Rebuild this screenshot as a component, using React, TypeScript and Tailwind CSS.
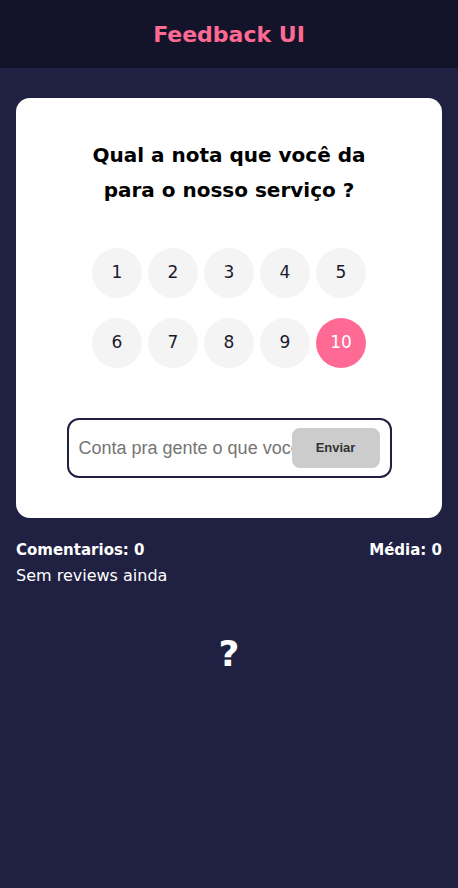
import { useState } from 'react';

const NOTES = [1, 2, 3, 4, 5, 6, 7, 8, 9, 10];

export default function App() {
  const [selected, setSelected] = useState(10);
  const [text, setText] = useState('');

  return (
    <div
      className="min-h-[888px] bg-[#202142] text-white"
      style={{ fontFamily: '"DejaVu Sans", "Noto Sans", sans-serif' }}
    >
      <header className="h-[68px] bg-[#13142a] flex items-center justify-center">
        <h1 className="text-[22px] font-bold text-[#ff6a95]">Feedback UI</h1>
      </header>

      <main className="px-4 pt-[30px]">
        <div className="bg-white rounded-[14px] h-[420px] flex flex-col items-center pt-[40px]">
          <h2 className="text-[20px] font-semibold text-black text-center leading-[35px]">
            Qual a nota que você da
            <br />
            para o nosso serviço ?
          </h2>

          <div className="mt-[40px] grid grid-cols-5 gap-x-[6px] gap-y-[20px]">
            {NOTES.map((n) => (
              <button
                key={n}
                onClick={() => setSelected(n)}
                className={
                  n === selected
                    ? 'w-[50px] h-[50px] rounded-full bg-[#ff6a95] text-white text-[17px] flex items-center justify-center'
                    : 'w-[50px] h-[50px] rounded-full bg-[#f4f4f4] text-[#1a1a2e] text-[17px] flex items-center justify-center'
                }
              >
                {n}
              </button>
            ))}
          </div>

          <div className="mt-[50px] w-[325px] h-[60px] border-2 border-[#202142] rounded-[12px] flex items-center pl-[10px] pr-[10px]">
            <input
              type="text"
              value={text}
              onChange={(e) => setText(e.target.value)}
              placeholder="Conta pra gente o que você achou..."
              className="flex-1 min-w-0 h-full text-[18px] text-black placeholder:text-[#757575] outline-none bg-transparent"
              style={{ fontFamily: '"Liberation Sans", Arial, sans-serif' }}
            />
            <button
              className="w-[88px] h-[40px] shrink-0 rounded-[8px] bg-[#cccccc] text-[#333] text-[13px] font-bold"
              style={{ fontFamily: '"Liberation Sans", Arial, sans-serif' }}
            >
              Enviar
            </button>
          </div>
        </div>

        <div className="mt-[22px] flex justify-between text-[15px] font-bold leading-[20px]">
          <span>Comentarios: 0</span>
          <span>Média: 0</span>
        </div>
        <p className="mt-[6px] text-[16px] leading-[20px]">Sem reviews ainda</p>

        <div className="mt-[50px] flex justify-center text-[36px] font-bold leading-none">
          ?
        </div>
      </main>
    </div>
  );
}
